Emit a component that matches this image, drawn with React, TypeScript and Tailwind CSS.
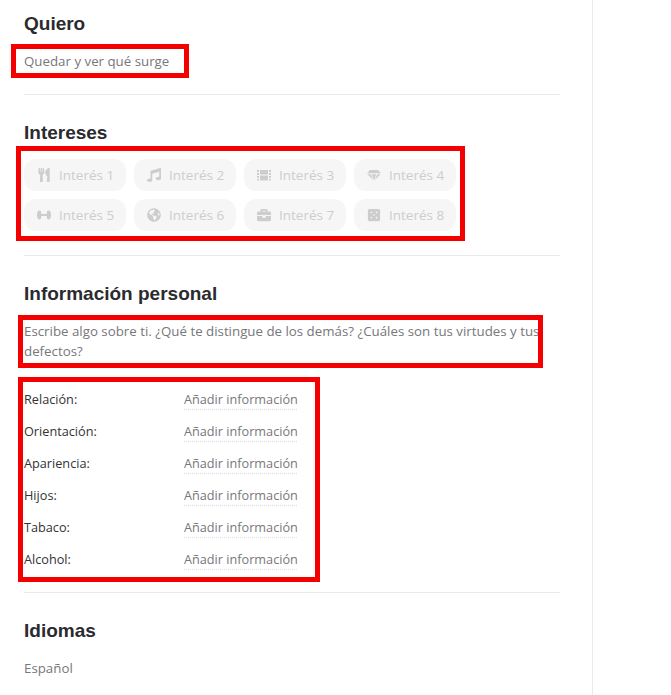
import type { JSX, ReactNode } from "react";
import { FaBriefcase, FaDiceFive, FaGlobeAmericas, FaMusic, FaUtensils } from "react-icons/fa";

const FilmIcon = ({ className }: { className?: string }): JSX.Element => (
  <svg viewBox="0 0 14 14" className={className} fill="currentColor">
    <path d="M0 2h2v2H0zM0 5h2v2H0zM0 8h2v2H0zM0 11h2v1.500H0zM12 2h2v2h-2zM12 5h2v2h-2zM12 8h2v2h-2zM12 11h2v1.500h-2zM3 2h8v4.600H3zM3 7.500h8v5H3z" />
  </svg>
);

const GemIcon = ({ className }: { className?: string }): JSX.Element => (
  <svg viewBox="0 0 14 14" className={className} fill="currentColor">
    <path d="M3 2h8l3 3.200H0zM0.300 6.200h3.500L6.300 12zM4.800 6.200h4.400L7 12.600zM10.200 6.200h3.500L7.700 12z" />
  </svg>
);

const WeightIcon = ({ className }: { className?: string }): JSX.Element => (
  <svg viewBox="0 0 14 14" className={className} fill="currentColor">
    <path d="M2.200 2.500c1.200 0 2 .8 2 2v1.500h5.600V4.500c0-1.200.8-2 2-2s2.200 1.600 2.200 4.500-1 4.500-2.200 4.500-2-.8-2-2V8H4.200v1.500c0 1.200-.8 2-2 2S0 9.900 0 7s1-4.500 2.200-4.500z" />
  </svg>
);

const interests = [
  { label: "Interés 1", icon: FaUtensils },
  { label: "Interés 2", icon: FaMusic },
  { label: "Interés 3", icon: FilmIcon },
  { label: "Interés 4", icon: GemIcon },
  { label: "Interés 5", icon: WeightIcon },
  { label: "Interés 6", icon: FaGlobeAmericas },
  { label: "Interés 7", icon: FaBriefcase },
  { label: "Interés 8", icon: FaDiceFive },
];

const details = ["Relación:", "Orientación:", "Apariencia:", "Hijos:", "Tabaco:", "Alcohol:"];

/* Red annotation frame drawn over a block, it takes no room in the flow */
const Marked = ({ frame, children }: { frame: string; children: ReactNode }): JSX.Element => (
  <div className="relative">
    {children}
    <div className={`absolute border-[5px] border-[#f40000] ${frame}`} />
  </div>
);

const Title = ({ children }: { children: ReactNode }): JSX.Element => (
  <h2 className="font-['Liberation_Sans',sans-serif] text-[19px] leading-[22px] font-bold text-[#2b2b2f]">{children}</h2>
);

export default function App(): JSX.Element {
  return (
    <div className="h-[695px] w-[671px] overflow-hidden bg-white font-['Open_Sans',sans-serif] text-[13.3px] text-[#77777b]">
      <div className="h-full w-[593px] border-r border-[#ebebeb] pl-6 pr-8 pt-[13px]">
        <Title>Quiero</Title>
        <Marked frame="-left-[13px] top-[9px] h-[34px] w-[178px]">
          <p className="pt-4 leading-5">Quedar y ver qué surge</p>
        </Marked>
        <hr className="mt-[23px] border-[#ebebeb]" />

        <div className="mt-[27px]">
          <Title>Intereses</Title>
        </div>
        <Marked frame="-left-2 top-[2px] h-[95px] w-[449px]">
          <div className="grid w-[432px] grid-cols-4 gap-2 pt-[15px] text-[13.5px]">
            {interests.map(({ label, icon: Icon }) => (
              <span key={label} className="flex h-8 items-center gap-2 rounded-xl bg-[#f6f6f6] pl-[13px] text-[#cdcdcd]">
                <Icon className="size-[14px] shrink-0" />
                {label}
              </span>
            ))}
          </div>
        </Marked>
        <hr className="mt-[24px] border-[#ebebeb]" />

        <div className="mt-[27px]">
          <Title>Información personal</Title>
        </div>
        <Marked frame="-left-[6px] top-[10px] h-[53px] w-[525px]">
          <p className="pt-4 leading-5">
            Escribe algo sobre ti. ¿Qué te distingue de los demás? ¿Cuáles son tus virtudes y tus defectos?
          </p>
        </Marked>
        <Marked frame="-left-[6px] top-[16px] h-[205px] w-[302px]">
          <div className="flex flex-col pt-[23px] text-[12.7px]">
            {details.map((name) => (
              <div key={name} className="flex h-8 items-center">
                <span className="w-40 text-[#333336]">{name}</span>
                <span className="underline decoration-[#e4e4e4] decoration-dotted underline-offset-4">Añadir información</span>
              </div>
            ))}
          </div>
        </Marked>
        <hr className="mt-[16px] border-[#ebebeb]" />

        <div className="mt-[27px]">
          <Title>Idiomas</Title>
        </div>
        <p className="pt-[16px] leading-5">Español</p>
      </div>
    </div>
  );
}
